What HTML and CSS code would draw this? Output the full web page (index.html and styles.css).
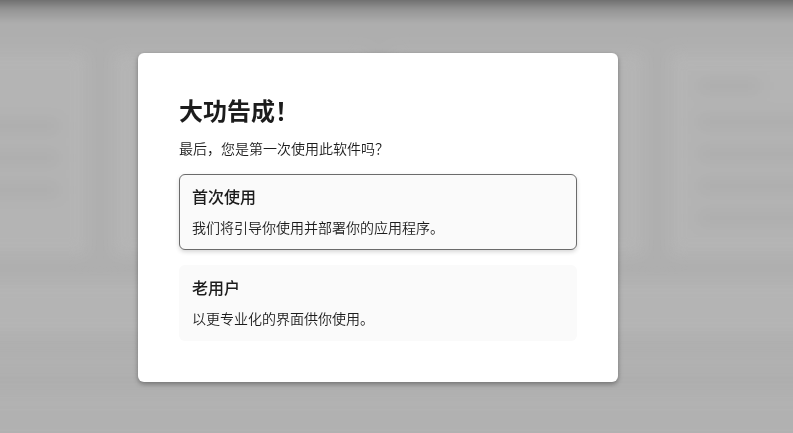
FILE: index.html
```html
<!DOCTYPE html>
<html lang="zh-CN">
<head>
  <meta charset="UTF-8">
  <meta name="viewport" content="width=device-width, initial-scale=1.0">
  <title>大功告成！</title>
  <link rel="stylesheet" href="styles.css">
</head>
<body>
  <!-- Blurred page behind the dialog -->
  <div class="page" aria-hidden="true">
    <div class="cards">
      <div class="card card-left">
        <div class="line"></div>
        <div class="line"></div>
        <div class="line"></div>
      </div>
      <div class="card"></div>
      <div class="card"></div>
      <div class="card card-right">
        <div class="line line-title"></div>
        <div class="line"></div>
        <div class="line"></div>
        <div class="line"></div>
        <div class="line"></div>
      </div>
    </div>
    <div class="band"></div>
    <div class="band band-thin"></div>
    <div class="band band-last"></div>
  </div>

  <div class="overlay">
    <main class="dialog" role="dialog" aria-modal="true" aria-labelledby="dialog-title">
      <h1 class="dialog-title" id="dialog-title">大功告成！</h1>
      <p class="dialog-text">最后，您是第一次使用此软件吗？</p>
      <div class="options">
        <button type="button" class="option active">
          <span class="option-title">首次使用</span>
          <span class="option-text">我们将引导你使用并部署你的应用程序。</span>
        </button>
        <button type="button" class="option">
          <span class="option-title">老用户</span>
          <span class="option-text">以更专业化的界面供你使用。</span>
        </button>
      </div>
    </main>
  </div>
</body>
</html>
```

FILE: styles.css
```css
* {
  box-sizing: border-box;
}

body {
  margin: 0;
  min-height: 100vh;
  font-family: "Noto Sans CJK SC", sans-serif;
  font-size: 14px;
  color: #1c1c1c;
  background: #f6f6f6;
  overflow: hidden;
}

/* Page behind */
.page {
  position: fixed;
  inset: 0 -24px;
  padding-top: 52px;
  filter: blur(8px);
}

.cards {
  display: grid;
  grid-template-columns: 112px 1fr 1fr 148px;
  gap: 24px;
  height: 204px;
}

.card {
  display: flex;
  flex-direction: column;
  gap: 20px;
  background: #fefefe;
}

.card-left {
  padding: 68px 28px 0 0;
}

.card-right {
  padding: 28px 0 0 28px;
}

.line {
  height: 12px;
  background: #f2f2f2;
}

.line-title {
  width: 64px;
  margin-bottom: 4px;
}

.band {
  height: 56px;
  margin-top: 24px;
  background: #fefefe;
}

.band-thin {
  height: 12px;
  margin-top: 20px;
  background: #fbfbfb;
}

.band-last {
  margin-top: 24px;
  background: #fafafa;
}

/* Dialog */
.overlay {
  position: fixed;
  inset: 0;
  display: flex;
  justify-content: center;
  align-items: center;
  padding: 2px 37px 0 0;
  background: linear-gradient(rgba(0, 0, 0, 0.36), rgba(0, 0, 0, 0.14) 10px, transparent 24px), rgba(0, 0, 0, 0.29);
}

.dialog {
  width: 480px;
  max-width: 100%;
  padding: 41px;
  background: #fff;
  border-radius: 6px;
  box-shadow: 0 2px 5px rgba(0, 0, 0, 0.36);
}

.dialog-title {
  margin: 0 0 12px;
  font-size: 24px;
  line-height: 32px;
  font-weight: 700;
}

.dialog-text {
  margin: 0 0 16px;
  line-height: 20px;
  font-weight: 350;
}

.options {
  display: flex;
  flex-direction: column;
  gap: 15px;
}

.option {
  display: flex;
  flex-direction: column;
  gap: 12px;
  width: 100%;
  padding: 12px;
  font: inherit;
  color: inherit;
  text-align: left;
  background: #fafafa;
  border: 1px solid transparent;
  border-radius: 6px;
  cursor: pointer;
}

.option.active,
.option:hover {
  border-color: #6b6b6b;
  box-shadow: 0 2px 4px rgba(0, 0, 0, 0.16);
}

.option-title {
  font-size: 16px;
  line-height: 18px;
  font-weight: 500;
}

.option-text {
  line-height: 20px;
  font-weight: 350;
}
```
